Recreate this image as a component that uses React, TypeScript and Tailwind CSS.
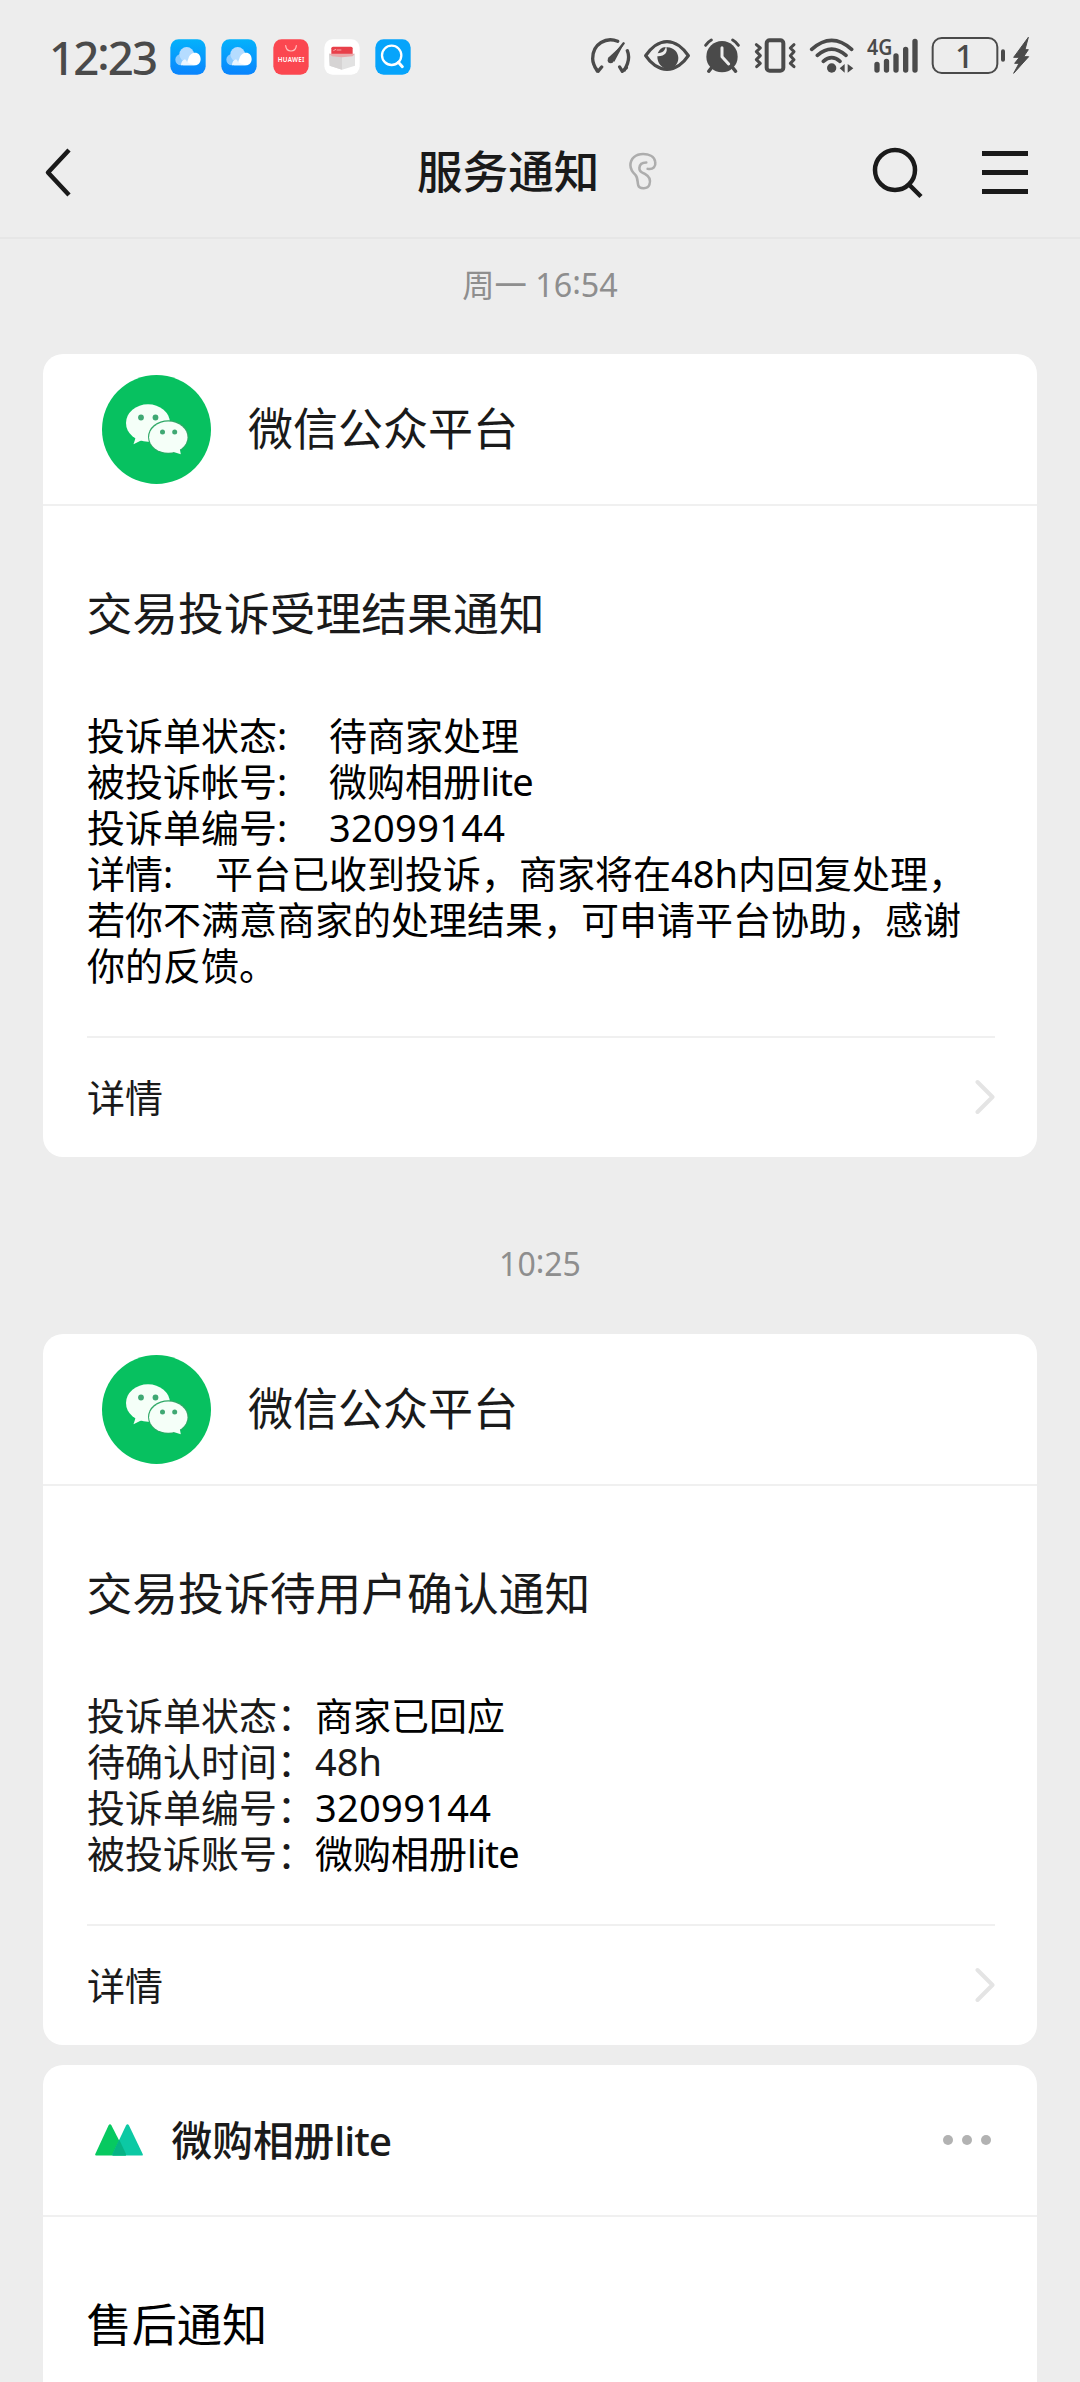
import type { ReactNode } from "react";

const INK = "#4a4a4a";

function Clock({ h, m }: { h: string; m: string }) {
  return (
    <>
      {h}
      <span className="relative -top-[0.09em]">:</span>
      {m}
    </>
  );
}

function CloudApp() {
  return (
    <svg width="36" height="36" viewBox="0 0 108 108">
      <defs>
        <linearGradient id="sky" x1="0" y1="0" x2="0" y2="1">
          <stop offset="0" stopColor="#04b2fb" />
          <stop offset="1" stopColor="#0a84fd" />
        </linearGradient>
      </defs>
      <rect x="1" y="1" width="106" height="106" rx="25" fill="url(#sky)" />
      <circle cx="33" cy="62" r="17" fill="#8ccbff" />
      <circle cx="50" cy="46" r="22" fill="#b5dcff" />
      <path d="M38 79c10-2 14-10 17-20 3-11 10-18 20-18 10 0 17 8 17 19 0 11-7 19-17 19z" fill="#fff" />
      <path d="M33 79h44c-14-4-24-6-30-17-5-3-14 4-14 17z" fill="#eaf5ff" />
    </svg>
  );
}

function StoreApp() {
  return (
    <svg width="36" height="36" viewBox="0 0 108 108">
      <rect x="1" y="1" width="106" height="106" rx="25" fill="#fb4750" />
      <path d="M38 20c1 10 8 16 16 16s15-6 16-16" fill="none" stroke="#ffc2c0" strokeWidth="3.5" strokeLinecap="round" />
      <text x="54" y="69" textAnchor="middle" fontFamily="Noto Sans" fontWeight="600" fontSize="19" textLength="80" fill="#fff">
        HUAWEI
      </text>
    </svg>
  );
}

function BoxApp() {
  return (
    <svg width="36" height="36" viewBox="0 0 108 108">
      <rect x="1" y="1" width="106" height="106" rx="25" fill="#fff" />
      <rect x="22" y="23" width="64" height="34" rx="5" fill="#e8404a" />
      <path d="M28 35l8-4M38 33h14" stroke="#f7a5a8" strokeWidth="3" />
      <path d="M15 44l39 8 39-8v36L54 92 17 80z" fill="#e2e2e2" />
      <path d="M15 44l39 8v40L17 80z" fill="#d6d4d4" />
      <path d="M16 44h76l-6 8-32 3-30-3z" fill="#e9a9ab" />
    </svg>
  );
}

function FindApp() {
  return (
    <svg width="36" height="36" viewBox="0 0 108 108">
      <rect x="1" y="1" width="106" height="106" rx="25" fill="#06a4fb" />
      <circle cx="50" cy="49" r="29" fill="none" stroke="#fff" strokeWidth="7" />
      <path d="M70 70l12 13" stroke="#fff" strokeWidth="9" strokeLinecap="round" />
    </svg>
  );
}

function StatusIcons() {
  return (
    <div className="flex gap-[10px]">
      <svg width="42" height="41" viewBox="60 48 126 123" fill="none" stroke={INK} strokeWidth="10" strokeLinecap="round" strokeLinejoin="round">
        <path d="M143 64C110 50 68 70 68 116c0 14 5 23 14 37M75 142l9 12 11-13" />
        <path d="M172 92c5 12 6 34-9 58M149 141l8 13 12-11" />
        <path d="M121 121L161 70" strokeWidth="7" />
        <path d="M113 115L163 69 133 125z" fill={INK} stroke="none" />
        <circle cx="122" cy="121" r="9" fill={INK} stroke="none" />
      </svg>
      <svg width="50" height="41" viewBox="216 48 150 123">
        <path d="M227 107c15-22 39-42 64-42s49 20 64 42c-15 23-39 41-64 41s-49-18-64-41z" fill="none" stroke={INK} strokeWidth="10" strokeLinejoin="round" />
        <path d="M289 82c5 14-4 28-27 27 0 20 12 36 30 38 20 0 33-15 33-33 0-18-16-34-36-32z" fill={INK} />
        <path d="M263 100c5-12 12-18 24-19-2 10-8 17-24 19z" fill={INK} />
      </svg>
      <svg width="40" height="41" viewBox="396 48 120 123" stroke={INK} strokeLinecap="round" fill="none">
        <path d="M407 76q6-10 17-16M505 76q-6-10-17-16" strokeWidth="9" />
        <path d="M425 143l-9 11M488 143l9 11" strokeWidth="10" />
        <circle cx="456" cy="110" r="47" fill={INK} stroke="none" />
        <path d="M456 83v27l20 22" stroke="#ededed" strokeWidth="9" strokeLinejoin="round" />
      </svg>
      <svg width="46" height="41" viewBox="546 48 138 123" stroke={INK} fill="none" strokeLinecap="round" strokeLinejoin="round">
        <rect x="590" y="61" width="50" height="91" rx="9" strokeWidth="12" />
        <path d="M559 74l12 10-12 11 12 12-12 12 12 11-11 10" strokeWidth="9" />
        <path d="M672 74l-11 10 11 11-11 12 11 12-11 11 11 10" strokeWidth="9" />
      </svg>
      <svg width="48" height="41" viewBox="714 48 144 123" stroke={INK} fill="none" strokeWidth="11" strokeLinecap="round">
        <path d="M725 88q60-54 120 0M742 106q43-37 86 0M760 124q25-22 50 0" />
        <circle cx="785" cy="144" r="14" fill={INK} stroke="none" />
        <path d="M824 132v26l-15-13zM833 132v26l17-13z" fill={INK} stroke="none" />
      </svg>
      <svg className="overflow-visible" width="54" height="41" viewBox="888 48 162 123" stroke={INK} strokeWidth="16" strokeLinecap="round">
        <path d="M921 133v17M949.500 124v26M978 108v42M1007 88v62M1035 64v86" />
        <text x="891" y="104" stroke="none" fill={INK} fontFamily="Noto Sans" fontWeight="600" fontSize="64" textLength="76" lengthAdjust="spacingAndGlyphs">
          4G
        </text>
      </svg>
      <svg className="overflow-visible" width="102" height="41" viewBox="1080 48 306 123" stroke={INK} fill="none">
        <rect x="1088" y="54" width="194" height="105" rx="27" strokeWidth="6" />
        <path d="M1299 94v25" strokeWidth="12" strokeLinecap="round" />
        <path d="M1375 52l-44 60h17l-14 18h13l-16 30 45-50h-15l14-21h-10z" fill={INK} strokeWidth="3" strokeLinejoin="round" />
        <text x="1183" y="144" textAnchor="middle" stroke="none" fill={INK} fontFamily="Noto Sans" fontWeight="500" fontSize="98">
          1
        </text>
      </svg>
    </div>
  );
}

function WeChatAvatar() {
  return (
    <svg width="109" height="109" viewBox="102 375.500 109 109">
      <circle cx="156.500" cy="430" r="54.500" fill="#07c160" />
      <ellipse cx="148" cy="423.500" rx="22" ry="18.700" fill="#f5fff8" />
      <path d="M136 437l-2.500 7.800 9-4.500z" fill="#f5fff8" />
      <ellipse cx="168.300" cy="437.500" rx="20.300" ry="16.800" fill="#2fa866" />
      <ellipse cx="168.300" cy="437.700" rx="19.200" ry="15.600" fill="#f5fff8" />
      <path d="M172 452l8.800 2.800-1.300-7z" fill="#f5fff8" />
      <g fill="#3fa873">
        <circle cx="141" cy="418" r="2.900" />
        <circle cx="155.500" cy="418" r="2.900" />
        <circle cx="162.500" cy="432.400" r="2.500" />
        <circle cx="174.700" cy="432.400" r="2.500" />
      </g>
    </svg>
  );
}

function Peaks() {
  return (
    <svg width="48" height="32" viewBox="0 0 48 32">
      <path d="M13.500 1.500q1.500-2.600 3 0L31 30q.5 1.500-1 1.500H1.200Q-.3 31.500.3 30z" fill="#07c960" />
      <path d="M31 1.500q1.500-2.600 3 0L47.700 30q.5 1.500-1 1.500H18.500q-1.500 0-1-1.500z" fill="#0cc9a4" />
      <path d="M24.200 15.500L31 30q.5 1.500-1 1.500H18.500q-1.500 0-1-1.500z" fill="#06b384" />
    </svg>
  );
}

function Chevron() {
  return (
    <svg width="20" height="36" viewBox="0 0 20 36" fill="none" stroke="#e4e4e4" strokeWidth="4" strokeLinecap="round" strokeLinejoin="round">
      <path d="M2.500 3L17.500 18 2.500 33" />
    </svg>
  );
}

function DetailRow() {
  return (
    <div className="mr-[42px] ml-[44px] mt-[48px] flex h-[121px] items-center justify-between border-t-2 border-[#f0f0f0] pb-[2px] text-[38px] leading-[46px] text-[#1a1a1a]">
      <span>详情</span>
      <Chevron />
    </div>
  );
}

function Card({ header, title, children }: { header: ReactNode; title: ReactNode; children: ReactNode }) {
  return (
    <section className="mx-[43px] rounded-[20px] bg-white">
      <div className="flex h-[152px] items-center border-b-2 border-[#f0f0f0]">{header}</div>
      <h2 className="mt-[79px] ml-[43.500px] text-[45.800px] leading-[56px] font-normal text-[#1a1a1a]">{title}</h2>
      {children}
    </section>
  );
}

function PlatformHeader() {
  return (
    <div className="flex items-center gap-[37px] pl-[59px] text-[45px] leading-[56px] text-[#1a1a1a]">
      <WeChatAvatar />
      <span>微信公众平台</span>
    </div>
  );
}

function AccountName() {
  return (
    <>
      微购相册<span className="tracking-[-0.7px]">lite</span>
    </>
  );
}

function OrderNumber() {
  return <span className="tracking-[0.3px]">32099144</span>;
}

function Line({ label, children }: { label: string; children: ReactNode }) {
  return (
    <p>
      {label}
      <span className="inline-block w-[52px]">:</span>
      {children}
    </p>
  );
}

const confirmRows = [
  { label: "投诉单状态：", value: "商家已回应", tone: "text-black" },
  { label: "待确认时间：", value: "48h", tone: "text-[#1a1a1a]" },
  { label: "投诉单编号：", value: <OrderNumber />, tone: "text-black" },
  { label: "被投诉账号：", value: <AccountName />, tone: "text-black" },
];

export default function App() {
  return (
    <div className="h-[2382px] w-[1080px] overflow-hidden bg-[#ededed] font-['Noto_Sans','Noto_Sans_CJK_SC',sans-serif]">
      <div className="flex h-[113px] items-center justify-between pr-[48px] pl-[49px]">
        <div className="flex items-center">
          <span className="w-[121px] text-[45.500px] leading-[56px] font-medium tracking-[-1.900px] whitespace-nowrap text-[#4a4a4a]">
            <Clock h="12" m="23" />
          </span>
          <div className="flex gap-[15.300px]">
            <CloudApp />
            <CloudApp />
            <StoreApp />
            <BoxApp />
            <FindApp />
          </div>
        </div>
        <StatusIcons />
      </div>

      <header className="flex h-[126px] items-start border-b-2 border-[#e6e6e6] pt-[32px]">
        <div className="flex h-[56px] w-[417px] items-center pl-[44px]">
          <svg width="28" height="50" viewBox="0 0 28 50" fill="none" stroke="#1a1a1a" strokeWidth="4.500" strokeLinejoin="round">
            <path d="M25 2L4 24.500 25 47" />
          </svg>
        </div>
        <h1 className="-mt-[2px] text-[45.600px] leading-[56px] font-medium text-[#1a1a1a]">服务通知</h1>
        <svg className="mt-[7px] ml-[29px]" width="30" height="39" viewBox="256 98 87 118" preserveAspectRatio="none" fill="none" stroke="#adadad" strokeWidth="7.500" strokeLinecap="round">
          <path d="M313 149c17 3 24-8 22-21-2-18-20-24-35-24-22 0-37 14-37 34 0 14 7 22 15 30 7 8 5 22 8 32 3 10 28 11 32-3 5-15 0-25-12-32-10-6-18-7-17-19 1-10 9-16 20-16" />
        </svg>
        <svg className="mt-[1px] ml-[213px]" width="52" height="54" viewBox="0 0 52 54" fill="none" stroke="#1a1a1a" strokeWidth="4.500">
          <circle cx="24" cy="24" r="20" />
          <path d="M38 38.500L50 50.500" />
        </svg>
        <div className="mt-[6px] ml-[59px] flex w-[46px] flex-col gap-[14px]">
          <i className="h-[5px] bg-[#1a1a1a]" />
          <i className="h-[5px] bg-[#1a1a1a]" />
          <i className="h-[5px] bg-[#1a1a1a]" />
        </div>
      </header>

      <div className="flex h-[115px] justify-center pt-[25px] text-[32.300px] leading-[40px] text-[#8e8e8e]">
        <span>
          周一 <Clock h="16" m="54" />
        </span>
      </div>

      <Card header={<PlatformHeader />} title="交易投诉受理结果通知">
        <div className="mt-[71px] pl-[44px] text-[38px] leading-[46px] whitespace-nowrap text-black">
          <Line label="投诉单状态">待商家处理</Line>
          <Line label="被投诉帐号">
            <AccountName />
          </Line>
          <Line label="投诉单编号">
            <OrderNumber />
          </Line>
          <Line label="详情">平台已收到投诉，商家将在48h内回复处理，</Line>
          <p>若你不满意商家的处理结果，可申请平台协助，感谢</p>
          <p>你的反馈。</p>
        </div>
        <DetailRow />
      </Card>

      <div className="flex h-[177px] justify-center pt-[87px] text-[32px] leading-[40px] text-[#8e8e8e]">
        <span>
          <Clock h="10" m="25" />
        </span>
      </div>

      <Card header={<PlatformHeader />} title="交易投诉待用户确认通知">
        <div className="mt-[71px] pl-[44px] text-[38px] leading-[46px] whitespace-nowrap text-[#1a1a1a]">
          {confirmRows.map((row) => (
            <p key={row.label}>
              {row.label}
              <span className={row.tone}>{row.value}</span>
            </p>
          ))}
        </div>
        <DetailRow />
      </Card>

      <div className="mt-[20px]">
        <Card
          header={
            <div className="flex flex-1 items-center pr-[46px] pl-[52px]">
              <Peaks />
              <span className="ml-[28.500px] text-[40.700px] leading-[50px] font-medium text-[#1a1a1a]">
                微购相册<span className="tracking-[-1px]">lite</span>
              </span>
              <div className="ml-auto flex gap-[9px]">
                <i className="size-[10px] rounded-full bg-[#b2b2b2]" />
                <i className="size-[10px] rounded-full bg-[#b2b2b2]" />
                <i className="size-[10px] rounded-full bg-[#b2b2b2]" />
              </div>
            </div>
          }
          title={<span className="text-[45.200px] text-black">售后通知</span>}
        >
          <div className="h-[80px]" />
        </Card>
      </div>
    </div>
  );
}
